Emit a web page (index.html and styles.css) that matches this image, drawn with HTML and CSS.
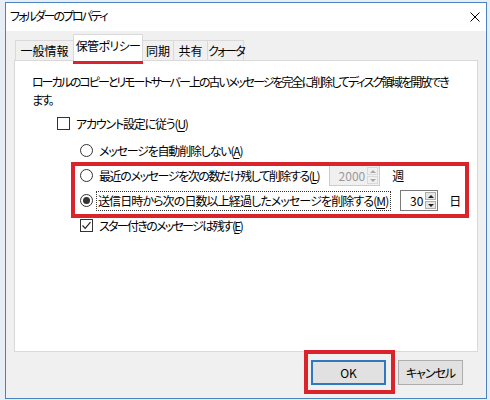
FILE: index.html
```html
<!DOCTYPE html>
<html lang="ja">
<head>
<meta charset="utf-8">
<link rel="stylesheet" href="styles.css">
</head>
<body>
<div class="window">
  <div class="titlebar">
    <span class="title">フォルダーのプロパティ</span>
    <svg class="close" width="10" height="10" viewBox="0 0 10 10"><path d="M0.5 0.5L9.5 9.5M9.5 0.5L0.5 9.5" stroke="#000" stroke-width="1" fill="none"/></svg>
  </div>
  <div class="tabs">
    <div class="tab t-general">一般情報</div>
    <div class="tab active t-policy">保管ポリシー</div>
    <div class="tab t-sync">同期</div>
    <div class="tab t-share">共有</div>
    <div class="tab t-quota">クォータ</div>
  </div>
  <div class="panel">
    <p class="desc">ローカルのコピーとリモートサーバー上の古いメッセージを完全に削除してディスク領域を開放でき<br>ます。</p>
    <div class="row check-row">
      <span class="checkbox"></span>
      <span class="label tight">アカウント設定に従う(<u>U</u>)</span>
    </div>
    <div class="row sub">
      <span class="radio"></span>
      <span class="label tight">メッセージを自動削除しない(<u>A</u>)</span>
    </div>
    <div class="row sub">
      <span class="radio"></span>
      <span class="label mid">最近のメッセージを次の数だけ残して削除する(<u>L</u>)</span>
      <span class="spin disabled wide"><span class="spin-value">2000</span><span class="arrows"><span class="arrow up"></span><span class="arrow down"></span></span></span>
      <span class="unit">週</span>
    </div>
    <div class="row sub">
      <span class="radio checked"></span>
      <span class="label loose focus">送信日時から次の日数以上経過したメッセージを削除する(<u>M</u>)</span>
      <span class="spin narrow"><span class="spin-value">30</span><span class="arrows"><span class="arrow up"></span><span class="arrow down"></span></span></span>
      <span class="unit unit-day">日</span>
    </div>
    <div class="row sub">
      <span class="checkbox checked"><svg width="11" height="11" viewBox="0 0 11 11"><path d="M1.5 5.5L4.2 8.3L9.5 2.2" stroke="#222" stroke-width="1.2" fill="none"/></svg></span>
      <span class="label kana">スター付きのメッセージは残す(<u>E</u>)</span>
    </div>
  </div>
  <div class="buttons">
    <button class="btn default">OK</button>
    <button class="btn cancel">キャンセル</button>
  </div>
</div>
<div class="mark mark-tab"></div>
<div class="mark mark-options"></div>
<div class="mark mark-ok"></div>
</body>
</html>
```

FILE: styles.css
```css
html, body {
  margin: 0;
  padding: 0;
}
body {
  width: 490px;
  height: 400px;
  background: #e8eef5;
  font-family: "Noto Sans CJK JP", "Noto Sans", sans-serif;
  font-size: 12px;
  font-feature-settings: "palt";
  color: #000;
  position: relative;
  overflow: hidden;
}
.window {
  margin: 2px 0 0 5px;
  width: 480px;
  height: 395px;
  border: 1px solid #4a83bd;
  background: #f0f0f0;
  display: flex;
  flex-direction: column;
}
.titlebar {
  height: 28px;
  background: #fff;
  display: flex;
  align-items: center;
  justify-content: space-between;
  padding: 0 6px 0 4px;
  flex: none;
}
.title {
  line-height: 16px;
  margin-top: -2px;
  letter-spacing: -2px;
}
.tabs {
  display: flex;
  align-items: flex-end;
  height: 26px;
  margin: 3px 0 0 9px;
  flex: none;
}
.tab {
  height: 20px;
  box-sizing: border-box;
  border: 1px solid #d9d9d9;
  border-bottom: none;
  border-right: none;
  line-height: 19px;
  text-align: center;
  background: #f0f0f0;
  white-space: nowrap;
}
.tab:last-child {
  border-right: 1px solid #d9d9d9;
}
.t-general { width: 58px; }
.t-policy { width: 70px; letter-spacing: -0.6px; }
.t-sync { width: 30px; }
.t-share { width: 34px; }
.t-quota { width: 37px; letter-spacing: -1.6px; }
.tab.active {
  height: 27px;
  margin-bottom: -1px;
  background: #fff;
  border-right: 1px solid #d9d9d9;
  line-height: 22px;
  position: relative;
  z-index: 1;
}
.tab.active + .tab {
  border-left: none;
}
.panel {
  margin: 0 8px;
  height: 292px;
  box-sizing: border-box;
  background: #fff;
  border: 1px solid #d9d9d9;
  padding: 12px 10px 0 17px;
  flex: none;
}
.desc {
  margin: 0;
  line-height: 18px;
  white-space: nowrap;
  letter-spacing: -2px;
}
.row {
  display: flex;
  align-items: center;
  height: 25px;
}
.check-row {
  margin: 2px 0 2px 25px;
}
.sub {
  margin-left: 48px;
}
.checkbox, .radio {
  width: 13px;
  height: 13px;
  box-sizing: border-box;
  border: 1px solid #333;
  background: #fff;
  flex: none;
  margin-right: 6px;
  display: flex;
  align-items: center;
  justify-content: center;
}
.radio {
  border-radius: 50%;
}
.radio.checked::after {
  content: "";
  width: 7px;
  height: 7px;
  border-radius: 50%;
  background: #333;
}
.label {
  line-height: 18px;
  white-space: nowrap;
}
.label u {
  text-underline-offset: 2px;
}
.tight { letter-spacing: -1.2px; }
.mid { letter-spacing: -1.4px; }
.loose { letter-spacing: -0.9px; }
.kana { letter-spacing: -1.7px; }
.focus {
  outline: 1px dotted #333;
  outline-offset: 0;
  padding: 0 2px 0 1px;
  margin-left: -2px;
}
.spin {
  display: flex;
  height: 21px;
  box-sizing: border-box;
  border: 1px solid #7a7a7a;
  background: #fff;
  margin-left: 10px;
  flex: none;
  letter-spacing: 0;
}
.spin.wide {
  width: 51px;
}
.spin.narrow {
  width: 38px;
}
.spin.disabled {
  border-color: #cccccc;
  background: #f0f0f0;
  color: #9a9a9a;
}
.spin-value {
  flex: 1;
  text-align: right;
  line-height: 19px;
  padding-right: 2px;
}
.arrows {
  width: 11px;
  display: flex;
  flex-direction: column;
  gap: 1px;
  padding: 1px 1px 1px 0;
}
.arrow {
  flex: 1;
  background: #e6e6e6;
  border: 1px solid #adadad;
  box-sizing: border-box;
  display: flex;
  align-items: center;
  justify-content: center;
}
.arrow::after {
  content: "";
  border-left: 3px solid transparent;
  border-right: 3px solid transparent;
}
.arrow.up::after {
  border-bottom: 3px solid #222;
}
.arrow.down::after {
  border-top: 3px solid #222;
}
.disabled .arrow {
  border-color: #dadada;
  background: #f0f0f0;
}
.disabled .arrow.up::after {
  border-bottom-color: #a8a8a8;
}
.disabled .arrow.down::after {
  border-top-color: #a8a8a8;
}
.unit {
  margin-left: 12px;
}
.unit-day {
  margin-left: 11px;
}
.buttons {
  display: flex;
  justify-content: flex-end;
  gap: 12px;
  margin-top: 8px;
  padding-right: 23px;
}
.btn {
  height: 25px;
  box-sizing: border-box;
  font: inherit;
  font-size: 12px;
  background: #e1e1e1;
  border: 1px solid #adadad;
  padding: 0;
  color: #000;
}
.btn.default {
  width: 75px;
  border: 2px solid #2f78c0;
}
.btn.cancel {
  width: 65px;
  letter-spacing: -1px;
}
.mark {
  position: absolute;
  border: 4px solid #d9242b;
  box-sizing: border-box;
}
.mark-tab {
  left: 73px;
  top: 34px;
  width: 70px;
  height: 30px;
}
.mark-options {
  left: 71px;
  top: 162px;
  width: 398px;
  height: 56px;
}
.mark-ok {
  left: 304px;
  top: 350px;
  width: 91px;
  height: 44px;
}
```
